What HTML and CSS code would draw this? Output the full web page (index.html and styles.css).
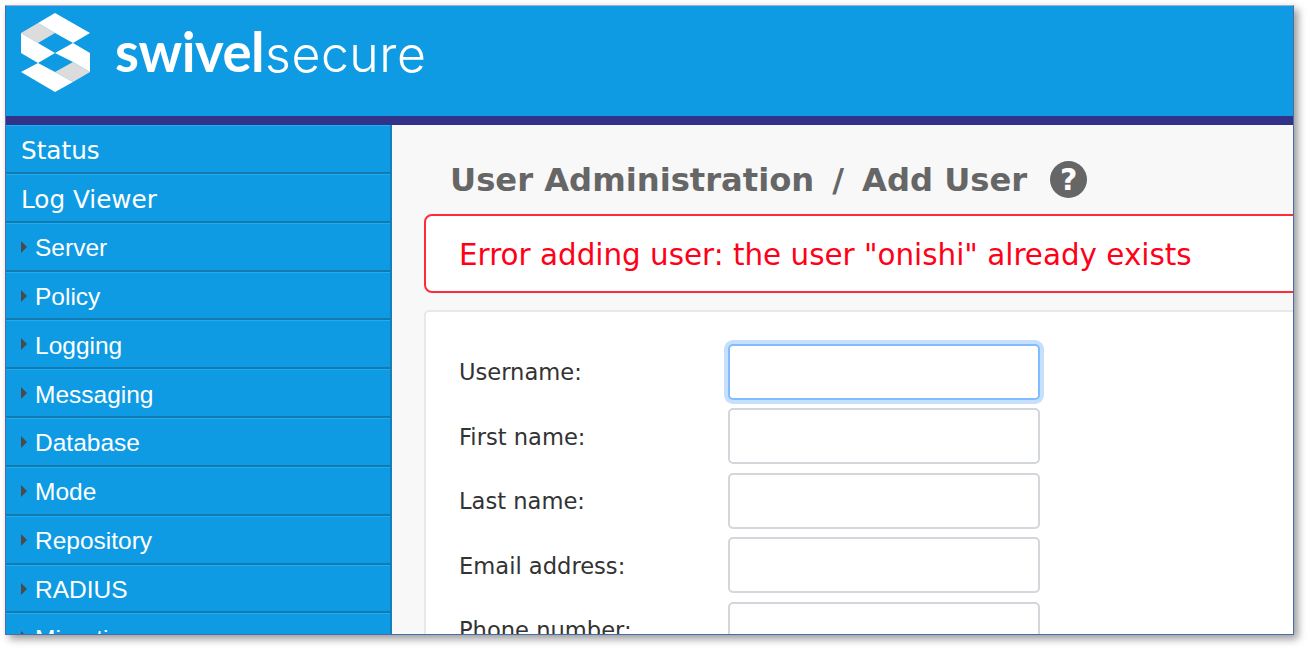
FILE: index.html
```html
<!DOCTYPE html>
<html lang="en">
<head>
  <meta charset="UTF-8">
  <title>User Administration / Add User</title>
  <link rel="stylesheet" href="styles.css">
</head>
<body>
  <div class="frame">
    <header class="banner">
      <svg class="logo-mark" viewBox="20 12 71 81" width="71" height="81" aria-hidden="true">
        <polygon fill="#dcdcdc" points="21,33 38,23 55,33 38,43"/>
        <polygon fill="#dcdcdc" points="55,72 73,62 90,72 73,82"/>
        <polygon fill="#fff" points="38,23 55,13 90,33 73,43 55,33"/>
        <polygon fill="#fff" points="21,33 55,53 38,63 21,53"/>
        <polygon fill="#fff" points="55,53 73,43 90,53 90,72 73,62"/>
        <polygon fill="#fff" points="38,63 55,72 73,82 55,92 21,72"/>
      </svg>
      <div class="logo-text"><b>swivel</b><span>secure</span></div>
    </header>
    <div class="band"></div>
    <div class="layout">
      <!-- Side menu -->
      <nav class="sidebar">
        <a class="nav-item">Status</a>
        <a class="nav-item">Log Viewer</a>
        <a class="nav-item sub">Server</a>
        <a class="nav-item sub">Policy</a>
        <a class="nav-item sub">Logging</a>
        <a class="nav-item sub">Messaging</a>
        <a class="nav-item sub">Database</a>
        <a class="nav-item sub">Mode</a>
        <a class="nav-item sub">Repository</a>
        <a class="nav-item sub">RADIUS</a>
        <a class="nav-item sub">Migration</a>
      </nav>
      <main class="content">
        <div class="title-row">
          <h1>User Administration<span class="slash">/</span>Add User</h1>
          <span class="help">?</span>
        </div>
        <div class="error-box">Error adding user: the user "onishi" already exists</div>
        <form class="user-form">
          <div class="form-row"><label>Username:</label><input class="focused" type="text"></div>
          <div class="form-row"><label>First name:</label><input type="text"></div>
          <div class="form-row"><label>Last name:</label><input type="text"></div>
          <div class="form-row"><label>Email address:</label><input type="text"></div>
          <div class="form-row"><label>Phone number:</label><input type="text"></div>
        </form>
      </main>
    </div>
  </div>
</body>
</html>
```
FILE: styles.css
```css
* {
  margin: 0;
  padding: 0;
  box-sizing: border-box;
}

html, body {
  height: 100%;
  overflow: hidden;
}

body {
  background-color: #fff;
  padding: 5px 13px 0 5px;
}

.frame {
  height: 630px;
  overflow: hidden;
  border: 1px solid #4a6ca8;
  border-top-color: #a9a9cf;
  box-shadow: 4px 4px 8px rgba(0, 0, 0, 0.4);
  display: flex;
  flex-direction: column;
}

.banner {
  height: 110px;
  flex: none;
  background-color: #0f9be3;
  display: flex;
  align-items: flex-start;
  padding: 6px 0 0 14px;
}

.logo-mark {
  flex: none;
}

.logo-text {
  margin: 9px 0 0 24px;
  font-size: 54.5px;
  line-height: 60px;
  color: #fff;
  white-space: nowrap;
}

.logo-text b {
  font-family: "Lato", sans-serif;
  font-weight: 700;
  letter-spacing: -0.5px;
}

.logo-text span {
  font-family: "Inter", sans-serif;
  font-weight: 300;
  font-size: 50px;
  letter-spacing: 0.5px;
  margin-left: 1px;
}

.band {
  height: 9px;
  flex: none;
  background-color: #323288;
}

.layout {
  flex: 1;
  display: flex;
  min-height: 0;
}

.sidebar {
  width: 386px;
  flex: none;
  background-color: #0f9be3;
  border-right: 2px solid #147fb8;
}

.nav-item {
  display: flex;
  align-items: center;
  height: 48.85px;
  padding: 3px 0 0 15px;
  border-top: 1px solid #19aef5;
  border-bottom: 2px solid #147aae;
  font-family: "DejaVu Sans", Verdana, sans-serif;
  font-size: 24.7px;
  color: #fff;
}

.nav-item.sub {
  padding-left: 29px;
  font-family: "Liberation Sans", Arial, sans-serif;
  font-size: 24.5px;
  position: relative;
}

.nav-item.sub::before {
  content: "";
  position: absolute;
  left: 15px;
  top: 17px;
  border-left: 6px solid #4a4a4a;
  border-top: 6px solid transparent;
  border-bottom: 6px solid transparent;
}

.content {
  flex: 1;
  min-width: 0;
  overflow: hidden;
  background-color: #f8f8f8;
  padding: 32px 0 0 32px;
}

.title-row {
  display: flex;
  align-items: center;
  gap: 23px;
  height: 44px;
  padding-left: 26px;
  margin-bottom: 13px;
}

.title-row h1 {
  font-family: "DejaVu Sans", Verdana, sans-serif;
  font-size: 32.2px;
  font-weight: 700;
  color: #666;
  white-space: nowrap;
  padding-top: 2px;
}

.slash {
  margin: 0 18px;
}

.help {
  width: 37px;
  height: 37px;
  border-radius: 50%;
  background-color: #666;
  color: #fff;
  font-family: "DejaVu Sans", Verdana, sans-serif;
  font-size: 30px;
  font-weight: 700;
  line-height: 37px;
  text-align: center;
}

.error-box {
  width: 1000px;
  height: 79px;
  display: flex;
  align-items: center;
  padding: 2px 0 0 33px;
  background-color: #fff;
  border: 2px solid #ff2a3a;
  border-radius: 8px;
  font-family: "DejaVu Sans", Verdana, sans-serif;
  font-size: 29.4px;
  color: #ff0019;
  margin-bottom: 17px;
}

.user-form {
  width: 1000px;
  height: 400px;
  background-color: #fff;
  border: 2px solid #e8e8e8;
  border-radius: 5px;
  padding: 31.5px 0 0 33px;
  display: flex;
  flex-direction: column;
  gap: 8.5px;
}

.form-row {
  display: flex;
  align-items: center;
}

.form-row label {
  width: 269px;
  flex: none;
  padding-top: 1px;
  font-family: "DejaVu Sans", Verdana, sans-serif;
  font-size: 22.6px;
  color: #333;
}

.form-row input {
  width: 312px;
  height: 56px;
  background-color: #fff;
  border: 2px solid #d3d6da;
  border-radius: 5px;
}

.form-row input.focused {
  border-color: #80bdff;
  box-shadow: 0 0 0 4px #c6dffd;
}
```
